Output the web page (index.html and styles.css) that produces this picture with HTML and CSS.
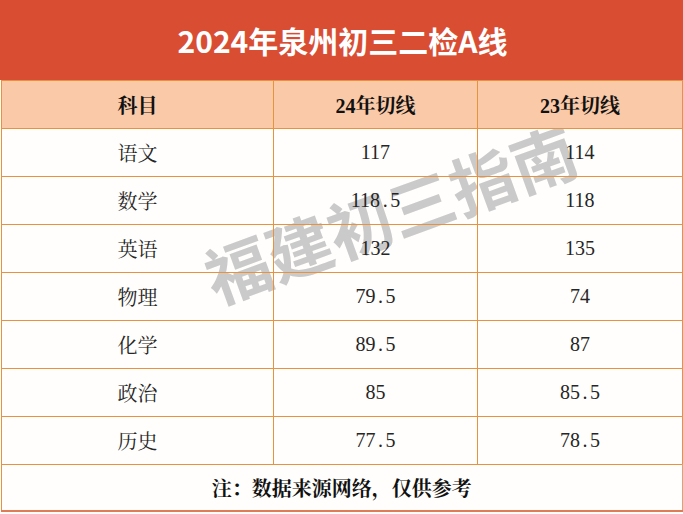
FILE: index.html
```html
<!DOCTYPE html>
<html lang="zh-CN">
<head>
<meta charset="utf-8">
<title>2024年泉州初三二检A线</title>
<link rel="stylesheet" href="styles.css">
</head>
<body>
<div class="card">
  <div class="title">2024年泉州初三二检A线</div>
  <div class="watermark">福建初三指南</div>
  <table class="grid">
    <colgroup><col class="c1"><col class="c2"><col class="c3"></colgroup>
    <thead>
      <tr class="head"><th>科目</th><th><span class="num">24</span>年切线</th><th><span class="num">23</span>年切线</th></tr>
    </thead>
    <tbody>
      <tr><td>语文</td><td class="num">117</td><td class="num">114</td></tr>
      <tr><td>数学</td><td class="num">118<span class="dot">.</span>5</td><td class="num">118</td></tr>
      <tr><td>英语</td><td class="num">132</td><td class="num">135</td></tr>
      <tr><td>物理</td><td class="num">79<span class="dot">.</span>5</td><td class="num">74</td></tr>
      <tr><td>化学</td><td class="num">89<span class="dot">.</span>5</td><td class="num">87</td></tr>
      <tr><td>政治</td><td class="num">85</td><td class="num">85<span class="dot">.</span>5</td></tr>
      <tr><td>历史</td><td class="num">77<span class="dot">.</span>5</td><td class="num">78<span class="dot">.</span>5</td></tr>
      <tr class="note"><td colspan="3">注：数据来源网络，仅供参考</td></tr>
    </tbody>
  </table>
</div>
</body>
</html>
```

FILE: styles.css
```css
html, body {
  margin: 0;
  padding: 0;
  background: #ffffff;
}

.card {
  position: relative;
  width: 683px;
  height: 514px;
  box-sizing: border-box;
  overflow: hidden;
  background: #fffefc;
}

.title {
  height: 80px;
  background: #d94d33;
  color: #ffffff;
  font-family: "Noto Sans CJK SC", "Noto Sans", sans-serif;
  font-weight: 700;
  font-size: 30px;
  line-height: 80px;
  text-align: center;
  padding-left: 2px;
}

.grid {
  position: relative;
  z-index: 1;
  width: 681px;
  margin-left: 1px;
  border-collapse: collapse;
  table-layout: fixed;
  font-family: "Liberation Serif", "Noto Serif CJK SC", "Noto Sans CJK SC", serif;
  font-size: 20px;
  color: #262626;
}

.c1 { width: 272px; }
.c2 { width: 204px; }
.c3 { width: 205px; }

.grid th,
.grid td {
  border: 1px solid #e8913f;
  height: 47px;
  padding: 0;
  text-align: center;
  vertical-align: middle;
  font-weight: 400;
}

.grid .head th {
  background: #f9c9a8;
  font-weight: 700;
  color: #111111;
}

.num {
  font-family: "Liberation Serif", serif;
  font-size: 20px;
}

.dot {
  display: inline-block;
  width: 10px;
  text-align: center;
}

.grid .note td {
  height: 45px;
  font-weight: 700;
  color: #111111;
  border-bottom: 2px solid #e07c55;
  border-right: 2px solid #d9a56f;
}

.watermark {
  position: absolute;
  z-index: 0;
  left: 170px;
  top: 172px;
  width: 440px;
  text-align: center;
  font-family: "Noto Sans CJK SC", sans-serif;
  font-weight: 700;
  font-size: 65px;
  line-height: 80px;
  color: #cacaca;
  transform: rotate(-20deg);
  transform-origin: center center;
  pointer-events: none;
}
```
